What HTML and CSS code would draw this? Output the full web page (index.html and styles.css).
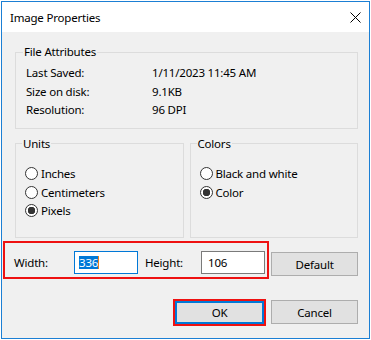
FILE: index.html
```html
<!DOCTYPE html>
<html lang="en">
<head>
    <meta charset="UTF-8">
    <meta name="viewport" content="width=device-width, initial-scale=1.0">
    <title>Image Properties</title>
    <link rel="stylesheet" href="styles.css">
</head>
<body>
    <div class="window">
        <div class="titlebar">
            <span class="title">Image Properties</span>
            <span class="close">
                <svg width="11" height="11" viewBox="0 0 11 11">
                    <path d="M0.5 0.5 L10.5 10.5 M10.5 0.5 L0.5 10.5" stroke="#000" stroke-width="1" fill="none"/>
                </svg>
            </span>
        </div>
        <div class="content">
            <fieldset class="group group-file">
                <legend>File Attributes</legend>
                <div class="attr-row"><span class="attr-label">Last Saved:</span><span>1/11/2023 11:45 AM</span></div>
                <div class="attr-row"><span class="attr-label">Size on disk:</span><span>9.1KB</span></div>
                <div class="attr-row"><span class="attr-label">Resolution:</span><span>96 DPI</span></div>
            </fieldset>

            <div class="group-pair">
                <fieldset class="group group-radio">
                    <legend>Units</legend>
                    <div class="radio-row"><span class="radio"></span>Inches</div>
                    <div class="radio-row"><span class="radio"></span>Centimeters</div>
                    <div class="radio-row"><span class="radio checked"></span>Pixels</div>
                </fieldset>
                <fieldset class="group group-radio">
                    <legend>Colors</legend>
                    <div class="radio-row"><span class="radio"></span>Black and white</div>
                    <div class="radio-row"><span class="radio checked"></span>Color</div>
                </fieldset>
            </div>

            <div class="size-row">
                <div class="size-box">
                    <span class="size-label">Width:</span>
                    <span class="field focused"><span class="sel">336</span><span class="caret"></span></span>
                    <span class="size-label height-label">Height:</span>
                    <span class="field">106</span>
                </div>
                <button class="btn btn-default">Default</button>
            </div>

            <div class="action-row">
                <span class="ok-wrap"><button class="btn btn-ok">OK</button></span>
                <button class="btn btn-cancel">Cancel</button>
            </div>
        </div>
    </div>
</body>
</html>
```

FILE: styles.css
```css
body {
    margin: 0;
    padding: 1px 0 0 1px;
    background-color: #fff;
    font-family: "Noto Sans", "Open Sans", sans-serif;
    font-size: 11.5px;
    letter-spacing: -0.2px;
    color: #000;
}

.window {
    width: 369px;
    height: 338px;
    box-sizing: border-box;
    border: 1px solid #1b7fd4;
    background-color: #f0f0f0;
    display: flex;
    flex-direction: column;
}

.titlebar {
    height: 30px;
    flex: none;
    background-color: #fff;
    display: flex;
    align-items: center;
    justify-content: space-between;
    padding: 0 8px 0 8px;
}

.close svg {
    display: block;
    margin-top: 1px;
}

.content {
    flex: 1;
    padding: 0 11px 0 0;
}

/* group boxes */
.group {
    border: 1px solid #dcdcdc;
    margin: 0;
    min-width: 0;
}

.group legend {
    padding: 0 1px;
    margin-left: -3px;
    line-height: 16px;
}

.group-file {
    margin: 12px 0 0 13px;
    padding: 4px 10px 8px 10px;
}

.attr-row {
    display: flex;
    line-height: 18.5px;
}

.attr-label {
    width: 126px;
}

.group-pair {
    display: flex;
    gap: 6px;
    margin: 7px 0 0 13px;
}

.group-radio {
    flex: 1;
    padding: 13px 9px 17px 9px;
}

.radio-row {
    display: flex;
    align-items: center;
    height: 18.5px;
}

.radio {
    width: 13px;
    height: 13px;
    box-sizing: border-box;
    border: 1px solid #333;
    border-radius: 50%;
    background-color: #fff;
    margin-right: 3px;
}

.radio.checked {
    background: radial-gradient(circle, #333 0 3.5px, #fff 4px);
}

/* width / height row */
.size-row {
    display: flex;
    align-items: flex-start;
    margin-top: 3px;
}

.size-box {
    width: 267px;
    height: 38px;
    box-sizing: border-box;
    margin-left: 1px;
    border: 2px solid #ee1111;
    padding: 8px 0 0 9px;
    display: flex;
    align-items: flex-start;
}

.size-label {
    width: 60px;
    line-height: 23px;
}

.height-label {
    width: 56px;
    margin-left: 7px;
}

.field {
    width: 64px;
    height: 23px;
    box-sizing: border-box;
    border: 1px solid #7a7a7a;
    background-color: #fff;
    padding-left: 6px;
    line-height: 21px;
    display: flex;
    align-items: center;
}

.field.focused {
    border-color: #0078d7;
    padding-left: 4px;
}

.sel {
    background-color: #0078d7;
    color: #fff;
    line-height: 13px;
}

.caret {
    width: 1px;
    height: 13px;
    background-color: #e8801c;
}

/* buttons */
.btn {
    font-family: inherit;
    font-size: inherit;
    letter-spacing: inherit;
    color: #000;
    background-color: #e1e1e1;
    border: 1px solid #adadad;
    padding: 0;
    margin: 0;
    box-sizing: border-box;
}

.btn-default {
    width: 87px;
    height: 24px;
    margin: 11px 0 0 2px;
}

.action-row {
    display: flex;
    justify-content: flex-end;
    align-items: flex-start;
    gap: 5px;
    margin-top: 20px;
}

.ok-wrap {
    display: flex;
    border: 2px solid #ee1111;
}

.btn-ok {
    width: 89px;
    height: 23px;
    border: 2px solid #0078d7;
}

.btn-cancel {
    width: 87px;
    height: 24px;
    margin-top: 1px;
}
```
